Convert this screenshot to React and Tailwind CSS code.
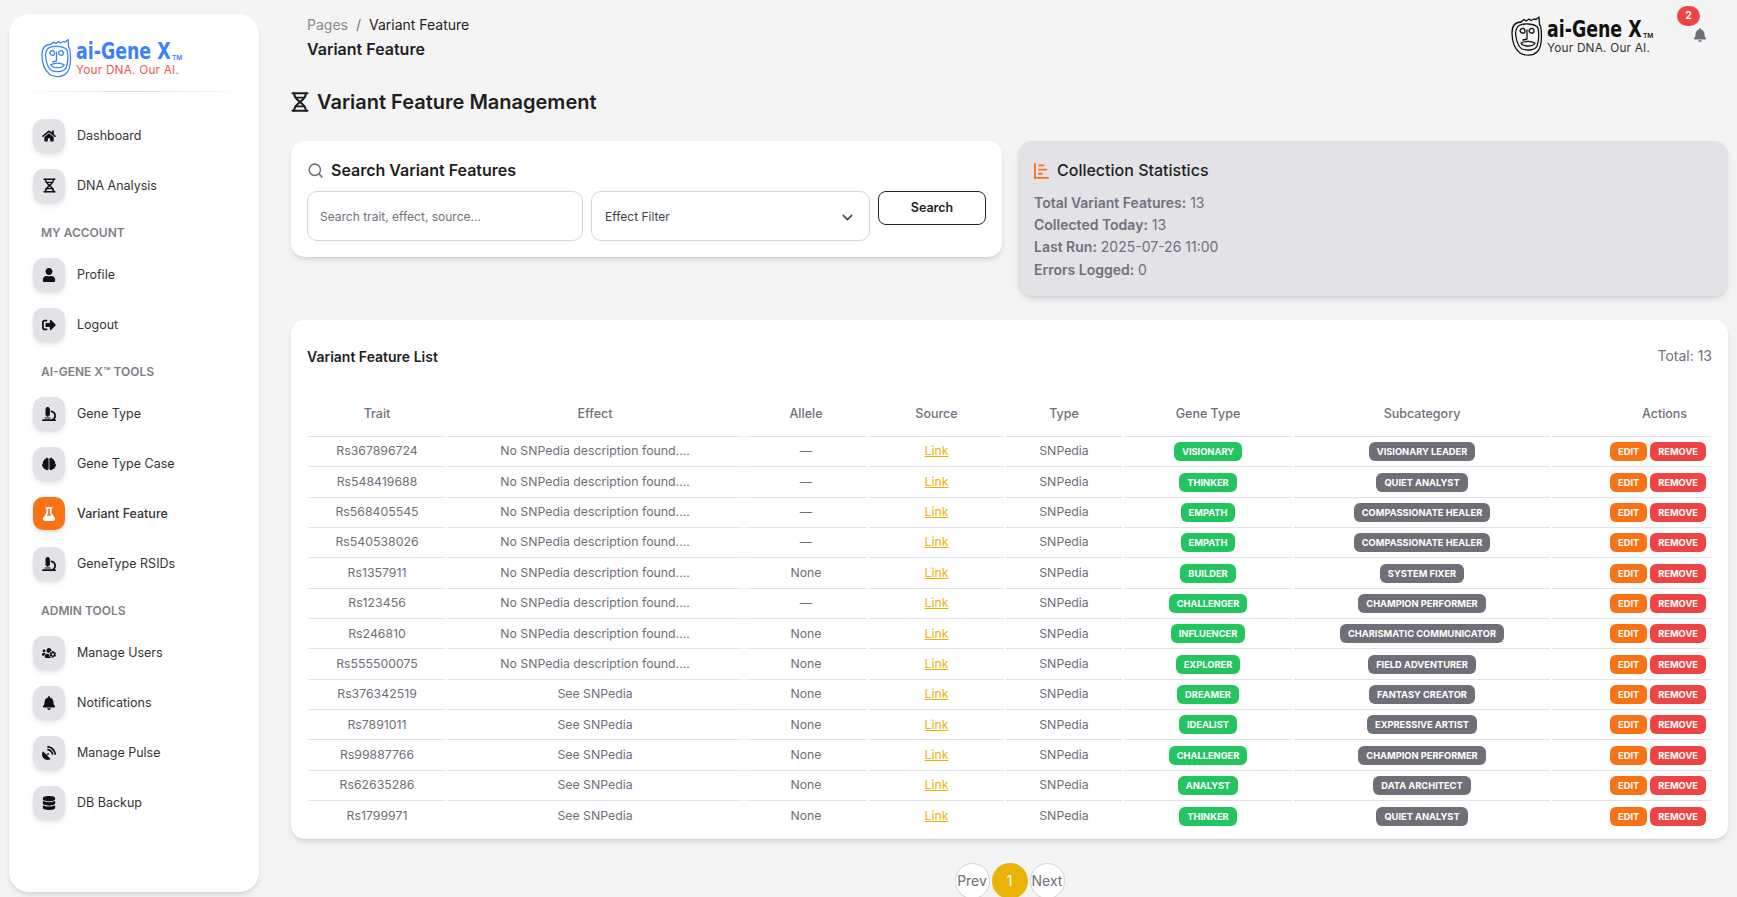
import { FaHome, FaUser, FaSignOutAlt, FaMicroscope, FaBrain, FaFlask, FaUsersCog, FaBell, FaSatelliteDish, FaDatabase } from 'react-icons/fa';
import { FiSearch, FiChevronDown } from 'react-icons/fi';

const rows = [
  ['Rs367896724', 'No SNPedia description found....', '—', 'VISIONARY', 'VISIONARY LEADER'],
  ['Rs548419688', 'No SNPedia description found....', '—', 'THINKER', 'QUIET ANALYST'],
  ['Rs568405545', 'No SNPedia description found....', '—', 'EMPATH', 'COMPASSIONATE HEALER'],
  ['Rs540538026', 'No SNPedia description found....', '—', 'EMPATH', 'COMPASSIONATE HEALER'],
  ['Rs1357911', 'No SNPedia description found....', 'None', 'BUILDER', 'SYSTEM FIXER'],
  ['Rs123456', 'No SNPedia description found....', '—', 'CHALLENGER', 'CHAMPION PERFORMER'],
  ['Rs246810', 'No SNPedia description found....', 'None', 'INFLUENCER', 'CHARISMATIC COMMUNICATOR'],
  ['Rs555500075', 'No SNPedia description found....', 'None', 'EXPLORER', 'FIELD ADVENTURER'],
  ['Rs376342519', 'See SNPedia', 'None', 'DREAMER', 'FANTASY CREATOR'],
  ['Rs7891011', 'See SNPedia', 'None', 'IDEALIST', 'EXPRESSIVE ARTIST'],
  ['Rs99887766', 'See SNPedia', 'None', 'CHALLENGER', 'CHAMPION PERFORMER'],
  ['Rs62635286', 'See SNPedia', 'None', 'ANALYST', 'DATA ARCHITECT'],
  ['Rs1799971', 'See SNPedia', 'None', 'THINKER', 'QUIET ANALYST'],
];

// hourglass shaped dna mark
const DnaGlass = ({ className }) => (
  <svg viewBox="0 0 18 20" fill="none" stroke="currentColor" strokeWidth="2.1" strokeLinecap="round" className={className}>
    <path d="M1.5 1.2H16.5M1.5 18.8H16.5" />
    <path d="M3.2 1.5C3.2 6 7 8 9 10C11 12 14.8 14 14.8 18.5" />
    <path d="M14.8 1.5C14.8 6 11 8 9 10C7 12 3.2 14 3.2 18.5" />
    <path d="M4.5 5.6H13.5M4.5 14.4H13.5" strokeWidth="1.7" />
  </svg>
);

const StatsIcon = ({ className }) => (
  <svg viewBox="0 0 16 18" fill="none" stroke="currentColor" strokeWidth="2" className={className}>
    <path d="M1 1V16.8H16" />
    <path d="M4.5 3.5H11M4.5 8H14M4.5 12.5H9" />
  </svg>
);

const nav = [
  { label: 'Dashboard', icon: FaHome },
  { label: 'DNA Analysis', icon: DnaGlass, box: 'w-[13px] h-[15px]' },
  { section: 'MY ACCOUNT' },
  { label: 'Profile', icon: FaUser },
  { label: 'Logout', icon: FaSignOutAlt },
  { section: 'AI-GENE X™ TOOLS' },
  { label: 'Gene Type', icon: FaMicroscope },
  { label: 'Gene Type Case', icon: FaBrain },
  { label: 'Variant Feature', icon: FaFlask, active: true },
  { label: 'GeneType RSIDs', icon: FaMicroscope },
  { section: 'ADMIN TOOLS' },
  { label: 'Manage Users', icon: FaUsersCog },
  { label: 'Notifications', icon: FaBell },
  { label: 'Manage Pulse', icon: FaSatelliteDish },
  { label: 'DB Backup', icon: FaDatabase },
];

const Face = ({ className }) => (
  <svg viewBox="0 0 32 40" fill="none" stroke="currentColor" strokeWidth="1.3" strokeLinecap="round" strokeLinejoin="round" className={className}>
    <path d="M10 6 L13 3.5 L15 5 L18 3 L20 4.5 L23 3 L25 3.5 L28 1 L28.5 9" />
    <path d="M10 6 C4 6 1 10 1 17 C1 26 4 33 9 37 C14 40 22 40 26 36 C30 32 31 22 30 13 C30 11 29 9 28.5 9" />
    <path d="M9 9 C5 11 4 15 5 21 C6 27 8 31 11 33 C17 35 24 34 26 30 C28 24 28 17 27 12 C25 8 15 7 9 9 Z" />
    <path d="M9 15 C10 11 14 12 14 15 C14 18 10 18 9 15 Z" />
    <path d="M18 15 C19 11 23 12 23 15 C23 18 19 18 18 15 Z" />
    <path d="M16 14 L16 23 L12 24" />
    <path d="M10 27 C14 25 20 25 24 27 C22 31 12 31 10 27 Z" />
  </svg>
);

const Logo = ({ main, sub, faceClass }) => (
  <div className="flex items-start">
    <Face className={faceClass} />
    <div className={`ml-[4px] w-[106px] ${main}`}>
      <div className="flex items-end h-[25px]">
        <span className="inline-block w-[96px] whitespace-nowrap origin-left scale-x-[0.84] font-['DejaVu_Sans_Condensed',sans-serif] font-bold text-[23px] leading-none">ai-Gene X</span>
        <span className="mb-[2px] text-[6.5px] leading-none font-semibold">TM</span>
      </div>
      <div className={`text-[11.8px] leading-none mt-[2px] whitespace-nowrap tracking-[0.2px] ${sub}`}>Your DNA. Our AI.</div>
    </div>
  </div>
);

const Sidebar = () => (
  <aside className="w-[250px] h-[878px] mt-[14px] ml-[9px] shrink-0 bg-white rounded-[20px] shadow-md">
    <div className="h-[78px] pl-[32px] pt-[24px] relative">
      <Logo main="text-[#3b82f6]" sub="text-[#f0575b]" faceClass="w-[31px] h-[40px] text-[#3b82f6]" />
      <div className="absolute bottom-0 left-[8px] right-[8px] h-px bg-gradient-to-r from-transparent via-[#dedee2] to-transparent" />
    </div>
    <nav className="pt-[27px] pl-[24px]">
      {nav.map((item) =>
        item.section ? (
          <p key={item.section} className="h-[26px] mb-[13px] pt-[2px] pl-[8px] flex items-center text-[12px] font-semibold text-[#7f7f87]">{item.section}</p>
        ) : (
          <a key={item.label} className="flex items-center h-[33px] mb-[17px]">
            <span className={`w-[32px] h-[33px] rounded-[10px] flex items-center justify-center shadow-md ${item.active ? 'bg-[#f97316] text-white' : 'bg-[#e2e2e7] text-[#111]'}`}>
              {item.box ? <item.icon className={item.box} /> : <item.icon size={14} />}
            </span>
            <span className={`ml-[12px] pt-[1px] text-[12.5px] text-[#343438] ${item.active ? 'font-medium' : ''}`}>{item.label}</span>
          </a>
        )
      )}
    </nav>
  </aside>
);

const Badge = ({ color, children }) => (
  <span className={`inline-block h-[19px] leading-[19px] px-[8px] rounded-[6px] text-white text-[9.3px] font-bold ${color}`}>{children}</span>
);

const VariantTable = () => {
  const headers = ['Trait', 'Effect', 'Allele', 'Source', 'Type', 'Gene Type', 'Subcategory', 'Actions'];
  return (
    <table className="w-full table-fixed border-separate border-spacing-x-[2px] border-spacing-y-0 text-center text-[12.3px] text-[#6f6f78]">
      <colgroup>
        <col className="w-[136px]" />
        <col className="w-[296px]" />
        <col className="w-[122px]" />
        <col className="w-[135px]" />
        <col className="w-[116px]" />
        <col className="w-[168px]" />
        <col className="w-[256px]" />
        <col className="w-[159px]" />
      </colgroup>
      <thead>
        <tr>
          {headers.map((h) => (
            <th key={h} className={`h-[45px] font-medium text-[12.5px] border-b border-[#e2e2e7] ${h === 'Actions' ? 'pl-[66px]' : ''}`}>{h}</th>
          ))}
        </tr>
      </thead>
      <tbody>
        {rows.map((r, i) => {
          const line = i < rows.length - 1 ? 'border-b border-[#e2e2e7]' : '';
          return (
            <tr key={r[0]} className="h-[30.35px]">
              <td className={line}>{r[0]}</td>
              <td className={line}>{r[1]}</td>
              <td className={line}>{r[2]}</td>
              <td className={line}><a className="text-[#eab308] underline">Link</a></td>
              <td className={line}>SNPedia</td>
              <td className={line}><Badge color="bg-[#22c55e]">{r[3]}</Badge></td>
              <td className={line}><Badge color="bg-[#6f6f78]">{r[4]}</Badge></td>
              <td className={line}>
                <div className="flex justify-end gap-[3px] pr-[5px]">
                  <Badge color="bg-[#f97316]">EDIT</Badge>
                  <Badge color="bg-[#ef4444]">REMOVE</Badge>
                </div>
              </td>
            </tr>
          );
        })}
      </tbody>
    </table>
  );
};

export default function App() {
  return (
    <div className="flex h-[897px] overflow-hidden bg-[#f4f4f4] font-['Inter',sans-serif] text-[#1f1f23]">
      <Sidebar />
      <main className="flex-1 min-w-0 pl-[32px] pr-[9px]">
        <header className="flex justify-between h-[82px] pl-[16px] relative">
          <div className="pt-[15px]">
            <div className="text-sm leading-[20px]">
              <span className="text-[#8a8a92]">Pages</span>
              <span className="mx-[8px] text-[#6f6f78]">/</span>
              <span>Variant Feature</span>
            </div>
            <div className="mt-[4px] text-base leading-[20px] font-semibold">Variant Feature</div>
          </div>
          <div className="pt-[16px] pr-[75px]">
            <Logo main="text-[#111]" sub="text-[#333]" faceClass="w-[32px] h-[40px] text-[#111]" />
          </div>
          <FaBell size={14} className="absolute right-[21px] top-[28px] text-[#6f6f78]" />
          <span className="absolute right-[28px] top-[6px] w-[23px] h-[20px] rounded-full bg-[#ef4444] text-white text-[10.5px] font-bold flex items-center justify-center">2</span>
        </header>
        <h1 className="flex items-center gap-[8px] h-[39px] text-[20px] font-semibold">
          <DnaGlass className="w-[18px] h-[20px]" />
          Variant Feature Management
        </h1>
        <div className="flex items-start gap-[16px] mt-[20px]">
          <section className="w-[711px] h-[116px] bg-white rounded-[14px] shadow-md px-[16px] pt-[18px]">
            <h2 className="flex items-center gap-[7px] h-[22px] text-base font-semibold">
              <FiSearch size={17} strokeWidth={2.2} className="text-[#6f6f78]" />
              Search Variant Features
            </h2>
            <div className="flex items-start gap-[8px] mt-[10px]">
              <div className="w-[276px] h-[50px] pt-[2px] border border-[#d4d4d8] rounded-[10px] flex items-center px-[12px] text-[12px] text-[#71717a]">Search trait, effect, source...</div>
              <div className="w-[279px] h-[50px] pt-[2px] border border-[#d4d4d8] rounded-[10px] flex items-center justify-between px-[13px] text-[12px] text-[#3f3f46]">
                Effect Filter
                <FiChevronDown size={17} />
              </div>
              <button className="w-[108px] h-[34px] border border-[#222] rounded-[8px] text-[12.5px] font-semibold">Search</button>
            </div>
          </section>
          <section className="w-[710px] h-[155px] bg-[#e2e2e7] rounded-[14px] shadow-md px-[16px] pt-[18px]">
            <h2 className="flex items-center gap-[8px] h-[22px] text-base font-medium">
              <StatsIcon className="w-[15px] h-[17px] text-[#f97316]" />
              Collection Statistics
            </h2>
            <ul className="mt-[11px] text-sm text-[#71717a] leading-[22px]">
              <li><b className="font-semibold">Total Variant Features:</b> 13</li>
              <li><b className="font-semibold">Collected Today:</b> 13</li>
              <li><b className="font-semibold">Last Run:</b> 2025-07-26 11:00</li>
              <li className="mt-[1px]"><b className="font-semibold">Errors Logged:</b> 0</li>
            </ul>
          </section>
        </div>
        <section className="mt-[24px] h-[519px] bg-white rounded-[14px] shadow-md px-[16px]">
          <div className="flex justify-between items-center h-[72px]">
            <h3 className="text-sm font-semibold pt-[1px]">Variant Feature List</h3>
            <span className="text-sm text-[#71717a]">Total: 13</span>
          </div>
          <VariantTable />
        </section>
        <div className="flex justify-center gap-[2px] mt-[24px]">
          <button className="w-[35px] h-[36px] rounded-full bg-white border border-[#d4d4d8] text-sm text-[#6f6f78]">Prev</button>
          <button className="w-[36px] h-[36px] rounded-full bg-[#eab308] text-sm text-white">1</button>
          <button className="w-[35px] h-[36px] rounded-full bg-white border border-[#d4d4d8] text-sm text-[#6f6f78]">Next</button>
        </div>
      </main>
    </div>
  );
}
